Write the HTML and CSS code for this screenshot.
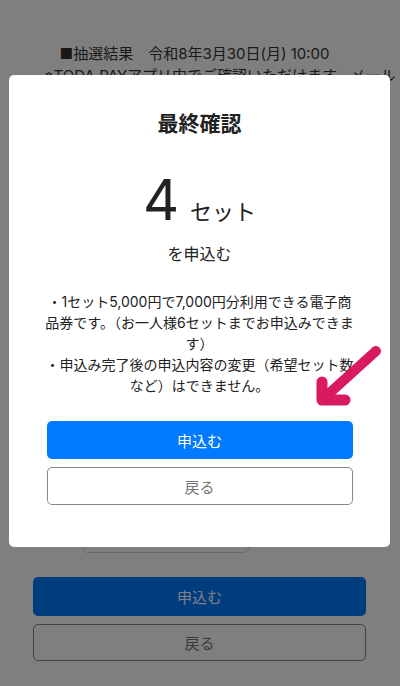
FILE: index.html
```html
<!DOCTYPE html>
<html lang="ja">
<head>
<meta charset="utf-8">
<title>最終確認</title>
<link rel="stylesheet" href="styles.css">
</head>
<body>
<div class="page">
  <div class="notice">
    <p class="notice-line">■抽選結果　令和8年3月30日(月) 10:00</p>
    <p class="notice-line notice-sub">※TODA PAYアプリ内でご確認いただけます。メール</p>
  </div>
  <div class="select-box"></div>
  <div class="page-actions">
    <button class="btn btn-primary">申込む</button>
    <button class="btn btn-outline">戻る</button>
  </div>
</div>

<div class="overlay">
  <div class="modal">
    <h2 class="modal-title">最終確認</h2>
    <div class="amount"><span class="amount-num">4</span><span class="amount-unit">セット</span></div>
    <p class="amount-label">を申込む</p>
    <div class="notes">
      <p>・1セット5,000円で7,000円分利用できる電子商品券です。（お一人様6セットまでお申込みできます）</p>
      <p>・申込み完了後の申込内容の変更（希望セット数など）はできません。</p>
    </div>
    <div class="modal-actions">
      <button class="btn btn-primary">申込む</button>
      <button class="btn btn-outline">戻る</button>
    </div>
  </div>
  <svg class="arrow" width="100" height="80" viewBox="0 0 100 80">
    <path d="M76 11 L23 59" fill="none" stroke="#d81b60" stroke-width="10" stroke-linecap="round"/>
    <path d="M22 42 L22 60 L45 60" fill="none" stroke="#d81b60" stroke-width="11" stroke-linecap="round" stroke-linejoin="round"/>
  </svg>
</div>
</body>
</html>
```

FILE: styles.css
```css
* { box-sizing: border-box; }
html, body { margin: 0; padding: 0; }
body {
  width: 400px;
  height: 686px;
  overflow: hidden;
  background: #fff;
  font-family: Inter, "Noto Sans CJK JP", sans-serif;
  color: #333;
}
p { margin: 0; }

.page {
  padding: 43px 34px 0 33px;
}
.notice {
  font-size: 15px;
  line-height: 22px;
  color: #333;
}
.notice-line {
  text-align: center;
  padding-right: 10px;
}
.notice-sub {
  text-align: left;
  white-space: nowrap;
  padding: 0 0 0 11px;
}
.select-box {
  margin: 422px 0 0 50px;
  width: 166px;
  height: 44px;
  border: 1px solid #d4d4d4;
  border-radius: 5px;
}
.page-actions {
  margin-top: 24px;
  display: flex;
  flex-direction: column;
  gap: 8px;
}
.page-actions .btn-primary { height: 39px; }
.page-actions .btn-outline { height: 37px; }

.btn {
  display: block;
  width: 100%;
  font-family: inherit;
  font-size: 15px;
  border-radius: 5px;
  padding: 0;
  margin: 0;
}
.btn-primary {
  background: #007bff;
  color: #fff;
  border: none;
}
.btn-outline {
  background: #fff;
  color: #777;
  border: 1px solid #888;
}

.overlay {
  position: fixed;
  inset: 0;
  background: rgba(0, 0, 0, 0.5);
  padding: 75px 10px 0 9px;
}
.modal {
  width: 381px;
  background: #fff;
  border-radius: 5px;
  padding: 34px 0 42px;
  text-align: center;
  color: #222;
}
.modal-title {
  margin: 0;
  font-size: 21px;
  line-height: 30px;
  font-weight: 700;
  color: #222;
}
.amount {
  margin-top: 29px;
  height: 64px;
  line-height: 64px;
  display: flex;
  justify-content: center;
  align-items: baseline;
  gap: 11px;
}
.amount-num {
  font-size: 56px;
  font-weight: 400;
  color: #222;
}
.amount-unit {
  font-size: 22px;
  color: #222;
}
.amount-label {
  margin-top: 10px;
  font-size: 16px;
  line-height: 24px;
}
.notes {
  width: 313px;
  margin: 25px auto 0;
  font-size: 14px;
  line-height: 21px;
  color: #222;
}
.modal-actions {
  width: 306px;
  margin: 25px auto 0;
  display: flex;
  flex-direction: column;
  gap: 8px;
}
.modal-actions .btn { height: 38px; }

.arrow {
  position: absolute;
  left: 300px;
  top: 340px;
}
```
